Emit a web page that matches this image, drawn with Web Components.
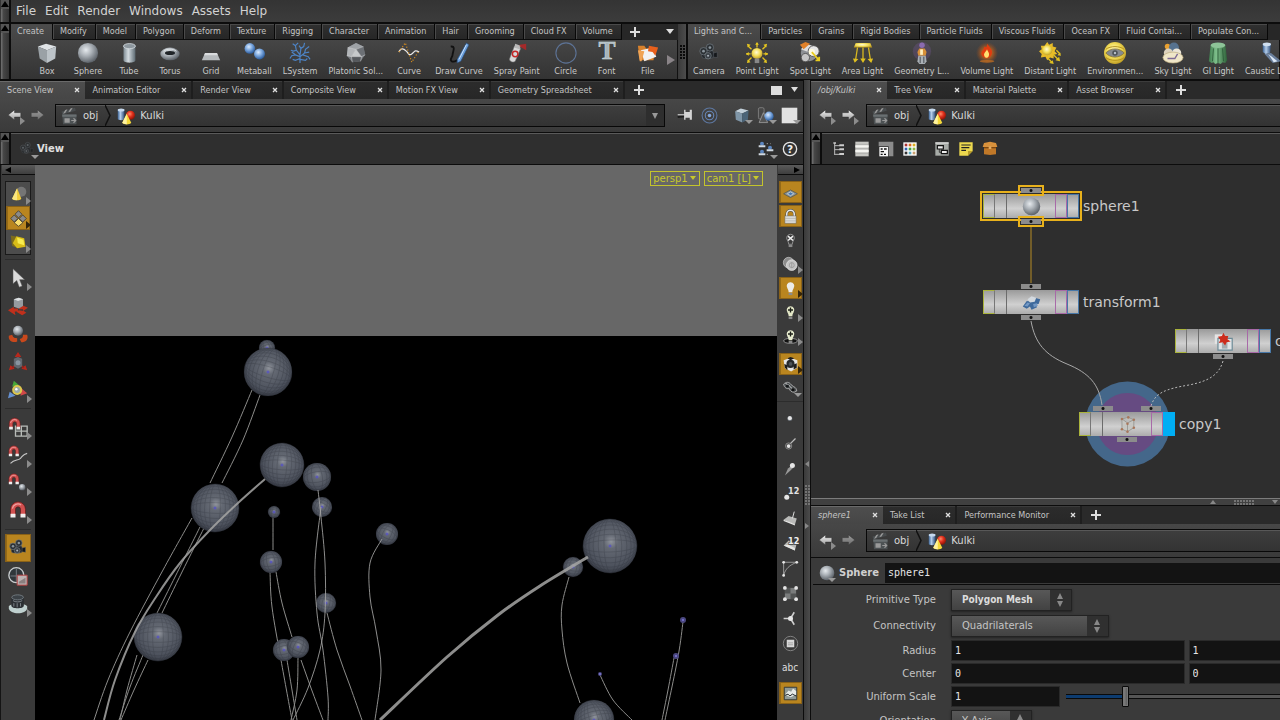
<!DOCTYPE html>
<html lang="en">
<head>
<meta charset="utf-8">
<title>Scene editor</title>
<style>
  html, body { height: 100%; }
  body {
    margin: 0;
    overflow: hidden;
    background: #2b2b2b;
    color: #cccccc;
    font: 10px/12px "DejaVu Sans", sans-serif;
  }
</style>
</head>
<body>
<hou-app></hou-app>

<script>
// ---------------------------------------------------------------- icons
const DEFS = `
  <defs>
    <radialGradient id="ball" cx=".4" cy=".35" r=".65"><stop offset="0" stop-color="#e6eaee"/><stop offset=".45" stop-color="#acb2b8"/><stop offset="1" stop-color="#5d636a"/></radialGradient>
    <radialGradient id="blue" cx=".4" cy=".35" r=".65"><stop offset="0" stop-color="#dcecff"/><stop offset=".5" stop-color="#7ba7de"/><stop offset="1" stop-color="#2c5c9c"/></radialGradient>
    <radialGradient id="redball" cx=".4" cy=".35" r=".65"><stop offset="0" stop-color="#ff8a6a"/><stop offset=".5" stop-color="#e0301c"/><stop offset="1" stop-color="#8c1408"/></radialGradient>
    <radialGradient id="gold" cx=".45" cy=".4" r=".65"><stop offset="0" stop-color="#fffbd8"/><stop offset=".5" stop-color="#f3de5a"/><stop offset="1" stop-color="#b8941c"/></radialGradient>
    <radialGradient id="glow"><stop offset="0" stop-color="#ff9a30"/><stop offset=".6" stop-color="#e06a10" stop-opacity=".45"/><stop offset="1" stop-color="#c05010" stop-opacity="0"/></radialGradient>
    <linearGradient id="steel"><stop offset="0" stop-color="#7d8a92"/><stop offset=".4" stop-color="#d3dbe0"/><stop offset="1" stop-color="#5d6a72"/></linearGradient>
    <linearGradient id="bluecyl"><stop offset="0" stop-color="#3c6496"/><stop offset=".4" stop-color="#b4cdea"/><stop offset="1" stop-color="#2c4c78"/></linearGradient>
    <linearGradient id="green"><stop offset="0" stop-color="#3d7a4c"/><stop offset=".4" stop-color="#7fc08c"/><stop offset="1" stop-color="#2d6038"/></linearGradient>
    <linearGradient id="arrow" x2="0" y2="1"><stop offset="0" stop-color="#f0f0f0"/><stop offset="1" stop-color="#a0a0a0"/></linearGradient>
  </defs>`;

const magnet = `<path d="M4 13V8a6 6 0 0 1 12 0v5h-4V8a2 2 0 0 0-4 0v5z" fill="#d0504f" stroke="#5c1a1a" stroke-width=".6"/><path d="M5.500 7.500a4.500 4.500 0 0 1 7-3" stroke="#f0a0a0" fill="none"/><path d="M4 11.500h4v3H4zM12 11.500h4v3h-4z" fill="#eee"/>`;
const camera = `<path d="M13 13l8-2v6l-8-1z" fill="#15181b" stroke="#60666c" stroke-width=".5"/><rect x="4" y="9" width="13" height="9" rx="3" fill="#23272b" stroke="#5c636a" stroke-width=".6"/><circle cx="13" cy="6" r="4" fill="#2c3135" stroke="#79828a" stroke-width=".7"/><circle cx="13" cy="6" r="1.500" fill="#8a949c"/><circle cx="6" cy="10" r="4" fill="#2c3135" stroke="#79828a" stroke-width=".7"/><circle cx="6" cy="10" r="1.500" fill="#8a949c"/><circle cx="11" cy="15" r="3.500" fill="#3a4046" stroke="#8a9299" stroke-width=".6"/><circle cx="11" cy="15" r="1.200" fill="#a8b0b8"/>`;
const cube = `<path d="M2 5l9-3 11 3-10 4z" fill="#dfe3e6"/><path d="M2 5l10 4v14L4 18z" fill="#9aa1a6"/><path d="M12 9l10-4-1 13-9 5z" fill="#bcc3c8"/>`;
const bulb = `<path d="M9 19h6v3.500H9z" fill="#8a8a8a"/><path d="M12 2a6 6 0 0 0-5 9.500c1 2 2 3.500 2 6.500h6c0-3 1-4.500 2-6.500A6 6 0 0 0 12 2z"`;
const dot = (x, y, r = 2) => `<circle cx="${x}" cy="${y}" r="${r}" fill="#e6e6e6"/>`;

const ICONS = {
  box: cube,
  sphere: `<circle cx="12" cy="12" r="11" fill="url(#ball)"/>`,
  tube: `<path d="M6 4v16c0 3.500 13 3.500 13 0V4z" fill="url(#steel)"/><ellipse cx="12.500" cy="4.500" rx="6.500" ry="2.800" fill="#8d979e" stroke="#dbe2e6" stroke-width=".8"/>`,
  torus: `<ellipse cx="12" cy="13" rx="10.500" ry="7" fill="url(#ball)"/><ellipse cx="12" cy="12" rx="5.500" ry="2.300" fill="#202428"/><path d="M5 10c3-3 11-3 14 0" stroke="#e4e8ea" fill="none"/>`,
  grid: `<path d="M5.500 12h13l3.500 8H2z" fill="#b6babd"/><path d="M5.500 12h13l1 2.500H4.500z" fill="#dadcde"/>`,
  metaball: `<circle cx="7.500" cy="7" r="5.800" fill="url(#blue)"/><circle cx="18" cy="13" r="6" fill="url(#blue)"/>`,
  lsystem: `<path d="M12 23V14L8 9l-3 1-3-1M8 9L7 4 4 2M7 4l3-3M12 16l-5-2-4 1-2 3M7 14l-4-3M12 14l1-7 3-2 1-4M13 7l-2-3M12 16l5-4 1-4 4-3M17 12l5-1M15 14l6 2 2 3M12 18l-5 2-3-1M12 19l6 1 2-2" stroke="#4d83c4" fill="none" stroke-width="1.300"/>`,
  platonic: `<path d="M12 1l8 4 2 9-5 7-9 1-6-7 1-9z" fill="#777b80"/><path d="M12 1l8 4-8 3-9-2z" fill="#9ea2a6"/><path d="M12 8l6 8H7z" fill="#c6c9cb"/><path d="M3 6l9 2-5 8-5-1z" fill="#b2b5b8"/><path d="M12 8l8-3 2 9-4 2z" fill="#6c7075"/><path d="M7 16h11l-1 5-9 1z" fill="#56595d"/><path d="M3 6l9 2 8-3M12 8l-5 8-5-1M7 16h11l4-2M12 8l6 8-1 5M7 16l1 6" fill="none" stroke="#ddd" stroke-width=".5"/>`,
  curve: `<path d="M1 11c2-5 5-4 8-1s3 5 6 3 3-5 8-2" fill="none" stroke="#e8e8e8" stroke-width="1.400"/><path d="M1 11L8 1l7 21 7-11" fill="none" stroke="#d08a20" stroke-width="1.300" stroke-dasharray="1.300 2"/>`,
  drawcurve: `<path d="M3 5c6-1 2 6 2 9s-4 5-1 7 6-2 8-2" fill="none" stroke="#111" stroke-width="2"/><path d="M20 1l3 2-9 18-4 2 0-4z" fill="#6ca0dc" stroke="#25466e" stroke-width=".7"/><path d="M20 3l-8 16" stroke="#cfe4fa"/>`,
  spray: `<path d="M9 5l7 2-6 14c-2 2-7 0-6-3z" fill="#d8d8d8" stroke="#777" stroke-width=".6"/><path d="M10 2l6 2-1 4-6-2z" fill="#b8b8b8"/><circle cx="10" cy="13" r="3" fill="none" stroke="#c62828" stroke-width="1.600"/><path d="M15 3l7-1 0 7-7-4z" fill="#c42222" opacity=".75"/>`,
  circle: `<circle cx="12" cy="12" r="11" fill="none" stroke="#5d7396" stroke-width="1.200"/>`,
  font: `<text x="12" y="19" text-anchor="middle" font-family="Liberation Serif, serif" font-weight="bold" font-size="28" fill="#a8b4ba" stroke="#dde4e8" stroke-width=".5">T</text>`,
  file: `<path d="M1 4h7l2 3h10l-2 13H3z" fill="#d8812c"/><path d="M4 9l14-3 3 10-13 5z" fill="#f2f2f2"/><path d="M1 9l7 1-3 11H3z" fill="#f0a455"/><path d="M13 4l10 2-3 9-3-4-5-1z" fill="#e8601c"/>`,
  camera,
  pointlight: `<path d="M12 6V1M6 8L2 4M18 8l4-4M5 13H0M19 13h5M6 17l-4 4M18 17l4 4" stroke="#e0c020" stroke-width="1.500" fill="none"/><path d="M10 3l2-3 2 3zM1 2l4 1-3 3zM23 2l-4 1 3 3zM3 11l-3 2 3 2zM21 11l3 2-3 2zM1 23l1-4 3 3zM23 23l-1-4-3 3z" fill="#e8c820"/><circle cx="12" cy="12.500" r="6" fill="url(#gold)"/><path d="M9.500 18h5v5h-5z" fill="#888"/>`,
  spotlight: `<circle cx="11" cy="12" r="9" fill="#8d9094"/><path d="M2 8l6-6 6 2-4 7z" fill="#ddd"/><path d="M1 3l6-3 5 2-7 6z" fill="#e0812a"/><circle cx="16" cy="10" r="6" fill="#e6e6e6" stroke="#555"/><circle cx="7" cy="17" r="4.500" fill="#c5c5c5" stroke="#555"/><circle cx="14" cy="11" r="3.500" fill="#fffbe0"/><path d="M14 11l8 9m0-4v4h-4" stroke="#e8cc20" fill="none" stroke-width="2"/>`,
  arealight: `<path d="M4 1h16l2 5H2z" fill="url(#gold)"/><path d="M6 6L4 19M12 6v13M18 6l2 13" stroke="#d8b820" stroke-width="1.400"/><path d="M1 18l6 .5-4 4zM9 18h6l-3 5zM17 18.500l6-.5-2 5z" fill="#e0c020"/>`,
  geolight: `<circle cx="12" cy="10" r="10" fill="#7a5a9a" opacity=".3"/><circle cx="12" cy="3.500" r="3" fill="#8a6ab0"/><path d="M9 7h6l2 4-1 4H8l-1-4z" fill="#d89038"/><path d="M10 8h3v6h-3z" fill="#fff0c0"/><path d="M8 15h8l1 6-2 3H9l-2-3z" fill="#aab0b6"/><path d="M10 16v7M14 16v7" stroke="#40454a"/>`,
  volumelight: `<circle cx="12" cy="12" r="12" fill="url(#glow)"/><path d="M12 2c3 4 7 7 5 12-2 5-9 5-11 0-1-4 3-5 3-9 2 1 3 2 3-3z" fill="#e03c10"/><path d="M12 8c1 3 3 4 2 7s-4 3-5 0 2-4 3-7z" fill="#ffe070"/><ellipse cx="12" cy="21" rx="8" ry="1.500" fill="#c87020" opacity=".7"/>`,
  distantlight: `<path d="M9 0l2 3 4-2 0 4 4 1-2 4 3 3-4 1 0 4-4-1-3 3-2-4-5 1 1-4-3-3 3-2-1-4 4 0z" fill="#e8bc28"/><circle cx="9" cy="9" r="5.500" fill="url(#gold)"/><path d="M15 13l6 6M19 9l4 4M10 18l4 4" stroke="#e0c020" stroke-width="1.500"/><path d="M23 21l-5-1 4-4zM24 15l-4-.5 3-3zM16 24l-5-1 4-3z" fill="#e0c020"/>`,
  envlight: `<circle cx="12" cy="12" r="12" fill="url(#gold)"/><path d="M2 8c5-4 15-4 20 0M2 17c5 4 15 4 20 0" stroke="#b08c18" fill="none"/><path d="M2 12c5-6 15-6 20 0-5 6-15 6-20 0z" fill="#858a90" stroke="#7a641c" stroke-width=".7"/><circle cx="12" cy="12" r="3" fill="#4c5258"/><circle cx="12" cy="12" r="1.300" fill="#b8c0c8"/>`,
  skylight: `<circle cx="6" cy="5" r="3" fill="#e8a030"/><circle cx="13" cy="6" r="5.500" fill="#56728f"/><circle cx="7" cy="12" r="5" fill="#ddd3be"/><circle cx="16" cy="12" r="5" fill="#ece6d8"/><ellipse cx="12" cy="17" rx="11" ry="6" fill="#efe6c8" stroke="#b8a878" stroke-width=".7"/><path d="M6 18h8l3-5" stroke="#7d6a94" fill="none" stroke-width="1.500"/>`,
  gilight: `<path d="M4 3l-2 18 3 2 2-1 2 2 3-1 3 1 2-2 3 1 2-3L20 3z" fill="url(#green)"/><ellipse cx="12" cy="3.500" rx="8" ry="3" fill="#8dc498"/><path d="M7 7L6 21M12 7v16M17 7l1 14" stroke="#2c5c38"/>`,
  causticlight: `<path d="M3 2v9l3 2 5-1 1-10z" fill="url(#bluecyl)"/><ellipse cx="7.500" cy="2.500" rx="4.500" ry="2" fill="#cfdff0"/><path d="M5 13l7-1 11 9-9 2z" fill="#7590b4" opacity=".8"/><path d="M9 13l10 8-4 1z" fill="#dce8f6"/>`,

  back: `<path d="M2 11l10-8v4.500h10v7H12V19z" fill="url(#arrow)" stroke="#222" stroke-width=".6"/>`,
  forward: `<path d="M22 11l-10-8v4.500H2v7h10V19z" fill="url(#arrow)" stroke="#222" stroke-width=".6"/>`,
  obj: `<path d="M2 6l18-5 1 4L3 10z" fill="#484c4e"/><path d="M4 9l3-5 3-1-3 5zM11 7l3-5 3-1-3 5z" fill="#999"/><path d="M3 10h19v13H4z" fill="#4d5254"/><path d="M3 10h19v3H3z" fill="#6a7072"/><path d="M6 15h7v6H6z" fill="#9a9a9a"/><path d="M15 18h6M18 15l3 3-3 3" fill="none" stroke="#999" stroke-width="1.500"/>`,
  geo: `<path d="M1 4v12c0 2 9 2 9 0V4z" fill="url(#bluecyl)"/><ellipse cx="5.500" cy="4" rx="4.500" ry="2" fill="#c6d9ee"/><circle cx="18" cy="11" r="6" fill="url(#redball)"/><path d="M13 9l6 12c-2 3-10 3-12 0z" fill="#f5d93a"/><path d="M13 9v14c-3 0-5-1-6-2z" fill="#fff3a0"/>`,
  pin: `<path d="M1 14l10-1" stroke="#1c1c1c" stroke-width="3"/><path d="M1 11h11" stroke="#ddd" stroke-width="1.500"/><path d="M10 4h2v3h6V4h3v14h-3v-3h-6v3h-2z" fill="#d4d4d4"/>`,
  target: `<circle cx="12" cy="12" r="10.500" fill="none" stroke="#5d77a0" stroke-width="1.500"/><circle cx="12" cy="12" r="6" fill="none" stroke="#6686b8" stroke-width="1.500"/><circle cx="12" cy="12" r="2.500" fill="#86a8dc"/>`,
  cubeblue: `<path d="M3 6l8-4 11 3-9 4z" fill="#c3d0da"/><path d="M3 6l10 3v13L4 18z" fill="#7f96a8"/><path d="M13 9l9-4-1 13-8 4z" fill="#4b6478"/>`,
  shapes: `<rect x="2" y="1" width="8" height="16" rx="2" fill="#484848" stroke="#909090"/><path d="M9 8l6 14H3z" fill="#555" stroke="#aaa"/><circle cx="17" cy="13" r="6.500" fill="url(#blue)"/>`,
  square: `<path d="M1 1h22v22H1z" fill="#e2e2e2"/>`,
  people: `<g fill="#5c86c0"><circle cx="6" cy="4" r="3"/><circle cx="18" cy="10" r="3"/><circle cx="6" cy="16" r="3"/></g><path d="M1 8h10M13 14h10M1 20h10" stroke="#d0d8e0" stroke-width="3"/><path d="M13 4h2M13 20h2M18 4h1" stroke="#999" stroke-width="1.500"/>`,
  help: `<circle cx="12" cy="12" r="10" fill="#333" stroke="#e4e4e4" stroke-width="2"/><text x="12" y="18" text-anchor="middle" font-family="DejaVu Sans, sans-serif" font-weight="bold" font-size="16" fill="#f0f0f0">?</text>`,

  tree: `<path d="M7 3v18M7 7h8M7 13h8M7 20h8" stroke="#bbb" fill="none" stroke-width="1.500"/><path d="M5 2h4v2H5zM14 5h7v3h-7zM14 11h7v3h-7zM14 18h7v3h-7z" fill="#ccc"/>`,
  list: `<path d="M2 1h20v22H2z" fill="#c6c6c2"/><path d="M2 8h20M2 15h20" stroke="#f4f4f0" stroke-width="3.500"/><path d="M2 5h20M2 11.500h20M2 18.500h20" stroke="#9e9e9a" stroke-width=".8"/>`,
  split: `<path d="M1 1h22v22h-7V8H1z" fill="#8c8c8c"/><path d="M2 9h13v14H2z" fill="#f4f4f4"/><path d="M4 12h3M9 12h4M4 16h5M4 20h3M9 20h3" stroke="#111" stroke-width="2"/>`,
  palette: `<path d="M2 2h20v20H2z" fill="#fff"/><g><path d="M4 4h4v4H4z" fill="#a83232"/><path d="M10 4h4v4h-4z" fill="#d86a20"/><path d="M16 4h4v4h-4z" fill="#e0b020"/><path d="M4 10h4v4H4z" fill="#3060b0"/><path d="M10 10h4v4h-4z" fill="#48a040"/><path d="M16 10h4v4h-4z" fill="#90b840"/><path d="M4 16h4v4H4z" fill="#333"/><path d="M10 16h4v4h-4z" fill="#5aa8c0"/><path d="M16 16h4v4h-4z" fill="#c8a070"/></g>`,
  nodebox: `<path d="M2 2h20v20H2z" fill="#a8aca8"/><path d="M2 2h20v2H2z" fill="#ddd"/><path d="M5 7h9v5H5zM11 14h9v5h-9z" fill="#eee" stroke="#111" stroke-width="1.800"/><path d="M8 12v5h3" stroke="#111" fill="none"/>`,
  note: `<path d="M2 2h20v13l-7 7H2z" fill="#ecd84e"/><path d="M15 22v-7h7z" fill="#b89c28"/><path d="M5 6h14M5 10h12M5 14h7" stroke="#222" stroke-width="1.800"/>`,
  chest: `<path d="M3 3l9-2 9 2 2 6H1z" fill="#d8913c"/><path d="M3 9h18v11l-9 1-9-1z" fill="#c07828"/><path d="M3 9h18v2H3z" fill="#7a4610"/><path d="M10 8h4v4h-4z" fill="#e0a860"/>`,

  selobj: `<circle cx="16" cy="8" r="7" fill="#757575"/><path d="M10 3l6 15c-2 3-11 3-13 0z" fill="#f0cc3c"/><path d="M10 3v17c-4 0-6-1-7-2z" fill="#f8e680"/>`,
  selprim: `<g stroke="#303030"><path d="M12 1l5 5-5 5-5-5zM6 7l5 5-5 5-5-5zM18 7l5 5-5 5-5-5z" fill="#8a8a8a"/><path d="M12 12l6 6-6 5-6-5z" fill="#f6dc70"/></g>`,
  seldyn: `<path d="M1 2l9 2 2 16-9-3z" fill="#8a7410" opacity=".8"/><path d="M9 3l11 3 2 12-12 2-6-7z" fill="#d8bc18"/><path d="M10 5l9 3 1 8-9-3z" fill="#f8ec50"/>`,
  select: `<path d="M6 1v18l4.500-4 3 8 3.500-1.500-3-7.500h6z" fill="#dadada" stroke="#555" stroke-width=".6"/>`,
  move: `<path d="M0 17l7-4v2h5v3l-4 1 1 4zM24 14l-7-3v2h-4v3h5v2zM10 19l7 4 5-3-3-2-6-1z" fill="#c0301c"/><path d="M7 4l6-2 5 2v8l-5 3-6-2z" fill="#969ba0"/><path d="M7 4l6-2 5 2-6 2z" fill="#dde0e2"/>`,
  rotate: `<path d="M1 14c-1 6 5 9 10 7v-4c-4 0-5-1-6-4zM23 13c2 6-2 9-7 9l-2-4c3 0 4-2 4-5z" fill="#c8481c"/><circle cx="12" cy="8" r="6" fill="url(#ball)"/>`,
  scale: `<path d="M12 0l4 6H8zM1 22l2-6 5 4zM23 22l-2-6-5 4z" fill="#b8281c"/><path d="M12 5v6M5 19l5-4M19 19l-5-4" stroke="#a02018" stroke-width="2"/><path d="M7 8l5-2 5 2v9l-5 3-5-3z" fill="#61676e"/><circle cx="12" cy="13" r="3" fill="#8894a0"/>`,
  handle: `<path d="M5 8l2-7 6 5z" fill="#48a838"/><path d="M0 22l2-8 7 5z" fill="#6690d0"/><path d="M23 16l-8 3 1-9z" fill="#d04848"/><circle cx="11" cy="12" r="6" fill="#dcc850"/><circle cx="11" cy="12" r="3.500" fill="#9aa"/><circle cx="10" cy="11" r="1.500" fill="#fff"/>`,
  snapgrid: `<path d="M9 11h14v12H9zM16 11v12M9 17h14" stroke="#b8bcb8" fill="none" stroke-width="1.600"/><g transform="translate(-3 -1) scale(1.100)">` + magnet + `</g>`,
  snapcurve: `<path d="M3 22c5-5 9-3 12-6s3-5 8-6" stroke="#c6c6c6" fill="none" stroke-width="1.400"/><g transform="translate(-3 -1)">` + magnet + `</g>`,
  snappoint: `<g transform="translate(-3 -1)">` + magnet + `</g><circle cx="17" cy="17" r="3.800" fill="url(#ball)"/>`,
  snapmulti: `<g transform="translate(-3 -2) scale(1.500)">` + magnet + `</g>`,
  flipbook: `<circle cx="10" cy="11" r="9" fill="#30363a" stroke="#c8ccce" stroke-width="1.600"/><path d="M3 12h14M10 3v16" stroke="#808890"/><path d="M11 11h12v12H11z" fill="#bdb2b2" stroke="#b04040" stroke-width="1.200"/><path d="M13 19l8-5v7h-8z" fill="#8a8080"/>`,
  render: `<path d="M1 15c0-4 22-4 22 0v2c-1 8-21 8-22 0z" fill="#bfd0cf"/><path d="M4 6c0-5 15-5 15 0v8c0 4-15 4-15 0z" fill="#2b2f33"/><ellipse cx="11.500" cy="4" rx="7" ry="3" fill="#3c4247" stroke="#7a8288"/><path d="M6 8c3 2 8 2 11 0M7 11v4M11 11v5M15 11v4" fill="none" stroke="#8a9298"/>`,

  plane: `<path d="M12 8l11 6-11 6-11-6z" fill="#8e989c" stroke="#40484c"/><path d="M12 11l5 3-5 3-5-3z" fill="#4878b0" stroke="#dce4e8"/>`,
  lock: `<path d="M6 12V8a6 6 0 0 1 12 0v4" fill="none" stroke="#40454a" stroke-width="4"/><path d="M6 12V8a6 6 0 0 1 12 0v4" fill="none" stroke="#e6e6e6" stroke-width="2.500"/><path d="M3 11h18v12H3z" fill="#dcdcda" stroke="#555" stroke-width=".7"/><path d="M3 15h18M3 19h18" stroke="#a8a8a4"/>`,
  nolight: bulb + ` fill="#3a3a3a" stroke="#bbb"/><path d="M8 5l8 7M16 5l-8 7" stroke="#eee" stroke-width="2.500"/>`,
  headlight: `<circle cx="9" cy="9" r="8.500" fill="#8c8c8c" stroke="#d4d4d4"/><circle cx="14" cy="13" r="8.500" fill="#c4c4c4" stroke="#efefef"/><circle cx="14" cy="13" r="4" fill="none" stroke="#8a8a8a"/><path d="M14 9v8" stroke="#888"/>`,
  light: bulb + ` fill="#ececea"/>`,
  lightplus: bulb + ` fill="#e4e8c8"/><path d="M12 4v8M8 8h8" stroke="#1c2018" stroke-width="2.200"/>`,
  lightshadow: `<ellipse cx="12" cy="19" rx="11" ry="4" fill="#111" stroke="#c8c8c8"/>` + bulb + ` fill="#e8ecd0"/><path d="M12 4v8M8 8h8" stroke="#1c2018" stroke-width="2.200"/>`,
  checker: `<path d="M1 5l11-4 11 4v12l-10 6-10-5z" fill="#e6e6e6"/><path d="M2 11l5 2v8l-4-4zM12 0l6 2-6 3-5-3zM17 12l5-2v7l-5 3z" fill="#1c1c1c"/><circle cx="12" cy="11" r="6.500" fill="#26292c"/><circle cx="12" cy="11" r="3" fill="#4c5258"/>`,
  eye: `<path d="M1 5c4-4 9-4 12 1l4 3c3 1 5 4 5 7l-4 2c-4 0-7-2-8-6-4 1-8-1-9-7z" fill="#4a4e50" stroke="#bbb" stroke-width="1.300"/><path d="M4 4c3 1 8 4 10 8" stroke="#ddd" fill="none" stroke-width="1.500"/><circle cx="7" cy="8" r="2.500" fill="#15181a"/><circle cx="16" cy="14" r="2.500" fill="#111"/>`,
  point: `<circle cx="11" cy="12" r="4" fill="url(#ball)"/>` + dot(11, 11.500, 3),
  pointnormal: `<path d="M9 15L20 4" stroke="#bbb" stroke-width="2"/><circle cx="9" cy="16" r="5" fill="#444" stroke="#aaa"/>` + dot(9, 16, 3),
  pointtrail: `<path d="M3 23l5-11 6-5 2 4-5 5z" fill="#999"/>` + dot(15, 7, 4),
  pointnum: dot(6, 18, 4) + `<text x="8" y="13" font-family="DejaVu Sans, sans-serif" font-weight="bold" font-size="13" fill="#e2e2e2">12</text>`,
  primnormal: `<path d="M1 14l8-6 13 4-3 10-9-4z" fill="#b9bab8"/><path d="M1 14l9 3 9 4v2L1 16z" fill="#e6e6e4"/><path d="M15 12l3-11" stroke="#ddd" stroke-width="1.600"/>`,
  primnum: `<path d="M1 15l8-8 13 5-3 11-9-4z" fill="#b9bab8"/><path d="M1 15l18 8v-4l-10-5z" fill="#e6e6e4"/><text x="8" y="12" font-family="DejaVu Sans, sans-serif" font-weight="bold" font-size="13" fill="#eee" stroke="#3a3a3a" stroke-width="2" paint-order="stroke">12</text>`,
  hull: `<path d="M1 23V2h21M1 23C4 12 10 7 22 2" fill="none" stroke="#b4b4b4" stroke-width="1.200"/>` + dot(1, 23, 2.200) + dot(1, 2, 2.200) + dot(22, 2, 2.200),
  uv: `<path d="M3 3h18v18H3z" fill="#7a7c7c"/><path d="M3 3h9v9H3zM12 12h9v9h-9z" fill="#525454"/>` + dot(3, 3, 3) + dot(21, 3, 3) + dot(3, 21, 3) + dot(21, 21, 3),
  axes: `<path d="M12 12l6-10M12 12l6 10M12 12H1" stroke="#cfcfcf" stroke-width="2.500"/>` + dot(12, 12, 4),
  material: `<circle cx="12" cy="12" r="11.500" fill="#3a3a3a" stroke="#858585" stroke-width="1.500"/><path d="M6 6h12v12H6z" fill="#d8d8d8"/><path d="M8 11h8M8 14h8" stroke="#888"/>`,
  image: `<path d="M2 2h20v20H2z" fill="#8f9a98" stroke="#303636" stroke-width="1.500"/><path d="M3 14l6-7 4 2 3-5 5 4v6l-9 4z" fill="#e6eae8"/><path d="M3 15l5-2 3 3 4-3 6 3" stroke="#252b2b" stroke-width="1.600" fill="none"/>`,

  transform: `<path d="M1 17l5-7 7 1 3-5 7 2-2 6h-4l2 4-7 3-2-4-4 3z" fill="#3f6a9c"/><path d="M7 8l5-4 6 2-2 5-6 1z" fill="#d3d9df"/><path d="M3 16l4-4 3 1-3 4zM14 14l5-1 1 3-5 2z" fill="#7398c4"/>`,
  object: `<path d="M1 3h12v12H1z" fill="#e4e4e4"/><path d="M5 8h18v15H5z" fill="#dfe4e6" stroke="#6d8a96" stroke-width="1.500"/><path d="M10 13h7v8h-7z" fill="#a4acb0"/><path d="M12 1l2 4 4 0-1 4 4 3-5 1-2 4-3-4-5 1 2-4-3-4 5-1z" fill="#cc2c1c"/>`,
  copy: `<path d="M5 5l8-2 7 3v10l-8 5-7-3zM5 5l7 5 8-4M12 10v11" fill="#c6c6c2" stroke="#90908c"/><g fill="#a8765a"><circle cx="5" cy="5" r="1.600"/><circle cx="13" cy="3" r="1.600"/><circle cx="20" cy="6" r="1.600"/><circle cx="20" cy="16" r="1.600"/><circle cx="12" cy="21" r="1.600"/><circle cx="5" cy="18" r="1.600"/><circle cx="12" cy="11" r="1.600"/></g>`
};

class HouIcon extends HTMLElement {
  constructor() {
    super();
    this.attachShadow({ mode: 'open' });
  }
  connectedCallback() {
    this.shadowRoot.innerHTML = `
      <style>
        :host { display: block; flex: none; width: 20px; height: 20px; }
        svg { display: block; width: 100%; height: 100%; overflow: visible; }
      </style>
      <svg viewBox="0 0 24 24" aria-hidden="true">${DEFS}${ICONS[this.getAttribute('name')] || ''}</svg>`;
  }
}
customElements.define('hou-icon', HouIcon);

// ---------------------------------------------------------------- small parts
class HouGrip extends HTMLElement {
  constructor() {
    super();
    this.attachShadow({ mode: 'open' });
    this.shadowRoot.innerHTML = `
      <style>
        :host {
          display: block;
          flex: none;
          box-sizing: border-box;
          width: 10px;
          border: solid #0c0c0c;
          border-width: 0 2px 0 0;
          margin-left: 1px;
          background: linear-gradient(90deg, #6a6a6a 1px, #484848 2px, #333);
        }
        svg { display: block; }
      </style>
      <svg width="8" height="9"><path d="M0 0h8v9H0z" fill="#555"/><path d="M4 1l4 6H0z" fill="#000"/></svg>`;
  }
}
customElements.define('hou-grip', HouGrip);

class HouMenuBar extends HTMLElement {
  constructor() {
    super();
    this.attachShadow({ mode: 'open' });
    this.shadowRoot.innerHTML = `
      <style>
        :host {
          display: flex;
          height: 22px;
          flex: none;
          background: linear-gradient(#343434, #3c3c3c);
          border-bottom: 2px solid #0c0c0c;
        }
        nav { display: flex; align-items: center; gap: 9px; padding-left: 5px; }
        button {
          border: 0; padding: 0; background: none; color: #d2d2d2;
          font: 12px/16px "DejaVu Sans", sans-serif;
        }
      </style>
      <hou-grip></hou-grip>
      <nav>${['File', 'Edit', 'Render', 'Windows', 'Assets', 'Help'].map(t => `<button>${t}</button>`).join('')}</nav>`;
  }
}
customElements.define('hou-menu-bar', HouMenuBar);

// ---------------------------------------------------------------- shelves
class HouShelfTab extends HTMLElement {
  constructor() {
    super();
    this.attachShadow({ mode: 'open' });
    this.shadowRoot.innerHTML = `
      <style>
        :host { display: flex; flex: none; }
        button {
          border: 0;
          border-right: 1px solid #080808;
          border-bottom: 1px solid #0c0c0c;
          box-shadow: inset 1px 1px #4a4a4a;
          padding: 0 8px 0 7px;
          background: linear-gradient(#303030, #262626);
          color: #c4c4c4;
          font: 9px/15px "DejaVu Sans Condensed", "DejaVu Sans", sans-serif;
        }
        :host([active]) button {
          background: linear-gradient(#4c4c4c, #444);
          border-bottom-color: #444;
          padding-left: 6px;
        }
      </style>
      <button role="tab"><slot></slot></button>`;
  }
}
customElements.define('hou-shelf-tab', HouShelfTab);

class HouShelfTool extends HTMLElement {
  constructor() {
    super();
    this.attachShadow({ mode: 'open' });
    this.shadowRoot.innerHTML = `
      <style>
        :host { display: block; flex: none; }
        button {
          display: flex;
          flex-direction: column;
          align-items: center;
          box-sizing: border-box;
          min-width: 41px;
          border: 0;
          padding: 2px 6px 2px 5px;
          background: none;
          color: #c8c8c8;
          font: 9px/11px "DejaVu Sans Condensed", "DejaVu Sans", sans-serif;
          white-space: nowrap;
        }
        hou-icon { width: 22px; height: 22px; margin-bottom: 2px; }
      </style>
      <button><hou-icon name="${this.getAttribute('icon')}"></hou-icon><slot></slot></button>`;
  }
}
customElements.define('hou-shelf-tool', HouShelfTool);

class HouShelf extends HTMLElement {
  constructor() {
    super();
    this.attachShadow({ mode: 'open' });
    this.shadowRoot.innerHTML = `
      <style>
        :host { display: flex; min-width: 0; overflow: hidden; }
        .shelf { flex: 1; min-width: 0; }
        .tabs { display: flex; background: #272727; height: 16px; }
        .tools {
          display: flex;
          height: 39px;
          padding-left: 16px;
          background: linear-gradient(#464646, #333);
          border-right: 1px solid #111;
        }
        button { border: 0; padding: 0; background: none; display: flex; align-items: center; }
        .add { margin-left: 8px; }
        .drop { margin: 0 4px 0 auto; }
        .more { margin-left: -2px; }
        :host([bare]) hou-grip, :host([bare]) button { display: none; }
        :host([bare]) .tools { padding-left: 0; }
      </style>
      <hou-grip></hou-grip>
      <div class="shelf">
        <div class="tabs">
          <slot name="tab"></slot>
          <button class="add" aria-label="New shelf"><svg width="10" height="10"><path d="M4 0h2v4h4v2H6v4H4V6H0V4h4z" fill="#ddd"/></svg></button>
          <button class="drop" aria-label="Shelf menu"><svg width="8" height="6"><path d="M0 0h8L4 5z" fill="#e0e0e0"/></svg></button>
        </div>
        <div class="tools">
          <slot></slot>
          <button class="more" aria-label="More tools"><svg width="8" height="10"><path d="M0 0l8 5-8 5z" fill="#8a8488"/></svg></button>
        </div>
      </div>`;
  }
}
customElements.define('hou-shelf', HouShelf);

class HouSplitter extends HTMLElement {
  constructor() {
    super();
    this.attachShadow({ mode: 'open' });
  }
  connectedCallback() {
    const kind = this.getAttribute('kind');
    const dots = (w, h, color = '#8a8a8a') => {
      let out = '';
      for (let y = 0; y < h; y += 3) {
        for (let x = 0; x < w; x += 3) out += `<path d="M${x} ${y}h2v2h-2z"/>`;
      }
      return `<svg width="${w}" height="${h}" fill="${color}">${out}</svg>`;
    };
    const marks = {
      shelf: dots(5, 14, '#0a0a0a'),
      column: `<svg width="4" height="6"><path d="M4 0v6L0 3z" fill="#888"/></svg>${dots(5, 20, '#747474')}<svg width="4" height="6"><path d="M0 0v6l4-3z" fill="#888"/></svg>`,
      row: `<svg width="6" height="4"><path d="M0 4h6L3 0z" fill="#888"/></svg>${dots(20, 5, '#747474')}<svg width="6" height="4"><path d="M0 0h6L3 4z" fill="#888"/></svg>`
    };
    this.shadowRoot.innerHTML = `
      <style>
        :host { display: flex; align-items: center; background: linear-gradient(90deg, #3a3a3a, #4c4c4c); }
        :host([kind=shelf]) { justify-content: center; border-right: 2px solid #0c0c0c; }
        :host([kind=column]) { flex-direction: column; gap: 18px; border: solid #0c0c0c; border-width: 0 1px; }
        :host([kind=column])::before { content: ""; flex: 21; }
        :host([kind=column])::after { content: ""; flex: 10; }
        :host([kind=row]) { gap: 18px; padding-left: 85%; height: 6px; background: #404040; border-top: 1px solid #7c7c7c; overflow: hidden; }
        svg { flex: none; }
      </style>${marks[kind]}`;
  }
}
customElements.define('hou-splitter', HouSplitter);

// ---------------------------------------------------------------- panes
class HouTab extends HTMLElement {
  constructor() {
    super();
    this.attachShadow({ mode: 'open' });
    this.shadowRoot.innerHTML = `
      <style>
        :host {
          display: flex;
          align-items: center;
          flex: none;
          gap: 21px;
          padding: 0 6px 0 7px;
          box-shadow: inset -2px 0 #1e1e1e, inset 0 1px #3c3c3c;
          background: linear-gradient(#2c2c2c, #272727);
          color: #c4c4c4;
        }
        :host([active]) { padding-right: 5px; background: linear-gradient(#4e4e4e, #464646); box-shadow: inset 0 1px #6a6a6a; }
        :host([current]) .name { font-style: italic; }
        button {
          border: 0; padding: 0; background: none; color: inherit;
          font: 9px/17px "DejaVu Sans Condensed", "DejaVu Sans", sans-serif;
          white-space: nowrap;
        }
        svg { display: block; }
      </style>
      <button class="name" role="tab"><slot></slot></button>
      <button aria-label="Close tab"><svg width="6" height="6"><path d="M1 1l4 4M5 1L1 5" stroke="#e0e0e0" stroke-width="1.300"/></svg></button>`;
  }
}
customElements.define('hou-tab', HouTab);

class HouTabs extends HTMLElement {
  constructor() {
    super();
    this.attachShadow({ mode: 'open' });
    this.shadowRoot.innerHTML = `
      <style>
        :host { display: flex; flex: none; height: 18px; background: #2a2a2a; border-top: 1px solid #0c0c0c; overflow: hidden; }
        button { border: 0; padding: 0; background: none; display: flex; align-items: center; }
        .add { margin-left: 9px; }
        .end { display: none; gap: 9px; margin: 0 5px 0 auto; }
        :host([controls]) .end { display: flex; }
      </style>
      <slot></slot>
      <button class="add" aria-label="New tab"><svg width="10" height="10"><path d="M4 0h2v4h4v2H6v4H4V6H0V4h4z" fill="#ddd"/></svg></button>
      <div class="end">
        <button aria-label="Maximize pane"><svg width="11" height="9"><path d="M0 0h11v9H0z" fill="#ddd"/></svg></button>
        <button aria-label="Pane menu"><svg width="7" height="6"><path d="M0 0h7L3.500 5z" fill="#ddd"/></svg></button>
      </div>`;
  }
}
customElements.define('hou-tabs', HouTabs);

// Button with an icon; "menu" adds the small arrow for the drop-down.
class HouTool extends HTMLElement {
  constructor() {
    super();
    this.attachShadow({ mode: 'open' });
  }
  connectedCallback() {
    this.shadowRoot.innerHTML = `
      <style>
        :host { display: block; flex: none; position: relative; }
        button {
          display: flex; align-items: center; justify-content: center;
          box-sizing: border-box;
          width: var(--tool-w, 24px);
          height: var(--tool-h, 24px);
          border: 0; padding: 0; background: none; color: #ddd;
          font: 10px/12px "DejaVu Sans Condensed", "DejaVu Sans", sans-serif;
        }
        :host([on]) button { background: #b9851f; box-shadow: inset 0 0 0 1px #8a6218, inset 2px 0 #946a18; }
        :host([dim]) hou-icon { opacity: .5; }
        hou-icon { width: var(--icon, 20px); height: var(--icon, 20px); }
        :host([menu])::after {
          content: "";
          position: absolute;
          right: -1px;
          bottom: 1px;
          border: 4px solid transparent;
          border-left: 5px solid #8c8c8c;
          border-right: 0;
        }
        :host([menu=down])::after { border: 4px solid transparent; border-top: 4px solid #999; border-bottom: 0; right: 0; bottom: 2px; }
        :host([on][menu])::after { border-left-color: #33240a; }
      </style>
      <button aria-label="${this.getAttribute('icon') || 'abc'}">${this.hasAttribute('icon') ? `<hou-icon name="${this.getAttribute('icon')}"></hou-icon>` : ''}<slot></slot></button>`;
  }
}
customElements.define('hou-tool', HouTool);

class HouPathBar extends HTMLElement {
  constructor() {
    super();
    this.attachShadow({ mode: 'open' });
    this.shadowRoot.innerHTML = `
      <style>
        :host {
          display: flex;
          align-items: center;
          flex: none;
          height: 33px;
          padding-left: 5px;
          background: linear-gradient(#474747, #3a3a3a);
          border-bottom: 1px solid #0c0c0c;
          --tool-w: 19px;
          --tool-h: 20px;
          --icon: 15px;
        }
        .nav { display: flex; gap: 4px; }
        .path {
          display: flex;
          align-items: stretch;
          flex: 1;
          min-width: 0;
          height: 21px;
          margin-left: 8px;
          border: 1px solid #080808;
          box-shadow: inset 0 1px #585858;
          background: linear-gradient(#3e3e3e, #333);
        }
        a {
          display: flex; align-items: center; gap: 5px;
          padding-left: 4px;
          color: #d8d8d8; text-decoration: none;
        }
        a hou-icon { width: 18px; height: 18px; }
        .chevron { margin: 0 2px 0 7px; }
        .drop { margin-left: auto; border: 0; padding: 0; width: 18px; background: #2e2e2e; }
        :host([plain]) .drop { display: none; }
        :host([plain]) .path { border-right: 0; }
        ::slotted(hou-tool) { --tool-w: 24px; --icon: 17px; }
      </style>
      <div class="nav">
        <hou-tool icon="back" menu></hou-tool>
        <hou-tool icon="forward" ${this.hasAttribute('ahead') ? 'menu' : 'dim'}></hou-tool>
      </div>
      <div class="path">
        <a href="#obj"><hou-icon name="obj"></hou-icon>obj</a>
        <svg class="chevron" width="6" height="21"><path d="M0 0l5 10.500L0 21" fill="none" stroke="#111" stroke-width="1.500"/></svg>
        <a href="#kulki"><hou-icon name="geo"></hou-icon>Kulki</a>
        <button class="drop" aria-label="Recent paths"><svg width="8" height="7"><path d="M1 0h6L4 6z" fill="#999"/></svg></button>
      </div>
      <slot></slot>`;
  }
}
customElements.define('hou-path-bar', HouPathBar);

class HouToolbar extends HTMLElement {
  constructor() {
    super();
    this.attachShadow({ mode: 'open' });
    this.shadowRoot.innerHTML = `
      <style>
        :host { display: flex; flex: none; height: 31px; border-bottom: 1px solid #0c0c0c; background: #2f2f2f; }
        .row {
          display: flex; flex: 1; align-items: center; min-width: 0;
          box-shadow: inset 0 1px #5a5a5a;
          padding: 0 1px 0 4px;
          --icon: 16px;
        }
      </style>
      <hou-grip></hou-grip>
      <div class="row"><slot></slot></div>`;
  }
}
customElements.define('hou-toolbar', HouToolbar);

// ---------------------------------------------------------------- 3D view
const BALLS = [
  [267, 348, 8], [268, 372, 24], [282, 465, 22], [317, 477, 14], [322, 507, 10], [274, 512, 6],
  [215, 508, 24], [271, 562, 11], [387, 534, 11], [326, 603, 10], [158, 637, 24], [284, 650, 11],
  [298, 647, 11], [573, 567, 10], [610, 546, 27], [594, 720, 20], [683, 620, 3], [676, 656, 3], [600, 674, 2]
];
// [width, x, y, x, y, ...]
const STEMS_BACK = [
  [1, 252, 390, 232, 437, 210, 483],
  [1, 260, 395, 243, 440, 222, 483],
  [1, 192, 518, 163, 570, 130, 632, 108, 680, 94, 720],
  [1, 204, 528, 182, 572, 162, 613],
  [1, 200, 527, 176, 575, 157, 613],
  [1, 148, 660, 134, 690, 121, 720],
  [1, 143, 655, 130, 687, 119, 720],
  [1, 137, 655, 127, 690, 120, 720],
  [1, 273, 515, 273, 550],
  [1, 270, 572, 272, 607, 281, 660, 292, 720],
  [1, 276, 572, 282, 603, 292, 637],
  [1, 287, 660, 292, 690, 297, 720],
  [1, 298, 658, 297, 690, 291, 720],
  [1, 301, 660, 311, 688, 323, 720],
  [1, 327, 613, 337, 650, 350, 686, 362, 720],
  [1, 569, 577, 562, 605, 562, 630, 567, 663, 580, 703],
  [1, 600, 675, 613, 700, 632, 720],
  [1, 683, 622, 678, 657, 665, 720],
  [1, 674, 658, 668, 690, 662, 720]
];
const STEMS_FRONT = [
  [2, 265, 479, 238, 503, 210, 530, 180, 563, 156, 597, 135, 632, 115, 680, 104, 720],
  [1, 318, 490, 321, 517, 325, 563, 325, 613, 320, 650, 308, 688, 293, 720],
  [1, 321, 507, 315, 563, 317, 613, 323, 650, 328, 697, 328, 720],
  [1, 382, 539, 370, 563, 370, 597, 376, 630, 381, 670, 375, 720],
  [3, 380, 720, 447, 657, 498, 615, 540, 586, 588, 557]
];

function spline(points) {
  const p = [];
  for (let i = 0; i < points.length; i += 2) p.push([points[i], points[i + 1]]);
  let d = `M${p[0]}`;
  for (let i = 0; i < p.length - 1; i++) {
    const a = p[i - 1] || p[i], b = p[i], c = p[i + 1], e = p[i + 2] || c;
    d += `C${b[0] + (c[0] - a[0]) / 6} ${b[1] + (c[1] - a[1]) / 6} ${c[0] - (e[0] - b[0]) / 6} ${c[1] - (e[1] - b[1]) / 6} ${c}`;
  }
  return d;
}

function stem([width, ...points]) {
  return `<path d="${spline(points)}" stroke-width="${width}"/>`;
}

function ball([x, y, r], i) {
  if (r < 4) return `<circle cx="${x}" cy="${y}" r="${r}" fill="#4b4880"/><circle cx="${x}" cy="${y}" r="1" fill="#7d78d8"/>`;
  const n = r > 15 ? 7 : 4;
  let mesh = '';
  for (let k = 0; k < n; k++) {
    const s = r * Math.sin((k / n) * Math.PI / 2);
    mesh += `<ellipse rx="${s}" ry="${r}"/><ellipse rx="${r}" ry="${s}"/>`;
  }
  return `<g transform="translate(${x} ${y})">
    <circle r="${r}" fill="url(#skin)"/>
    <g transform="rotate(${(i * 37) % 50 - 20})" fill="none" stroke="#23262e" stroke-width=".6" opacity=".32">${mesh}</g>
    <path d="M-1.500 0h3M0-1.500v3" stroke="#5450c8"/>
  </g>`;
}

class HouViewport extends HTMLElement {
  constructor() {
    super();
    this.attachShadow({ mode: 'open' });
    this.shadowRoot.innerHTML = `
      <style>
        :host { display: block; flex: 1; min-width: 0; position: relative; background: #000; overflow: hidden; }
        svg.scene { display: block; width: 100%; height: 100%; }
        .cams { position: absolute; top: 6px; right: 14px; display: flex; gap: 4px; }
        button {
          display: flex; align-items: center; gap: 1px;
          border: 1px solid #c4c42c; padding: 0 2px; background: none; color: #c8c82c;
          font: 10px/13px "DejaVu Sans", sans-serif;
        }
      </style>
      <svg class="scene" viewBox="35 165 742 555" preserveAspectRatio="xMinYMin slice">
        <defs>
          <radialGradient id="skin" cx=".52" cy=".42" r=".58">
            <stop offset="0" stop-color="#90949c"/><stop offset=".22" stop-color="#646973"/>
            <stop offset=".8" stop-color="#4c515c"/><stop offset="1" stop-color="#3a3e48"/>
          </radialGradient>
        </defs>
        <path d="M0 0h2000v336H0z" fill="#676767"/>
        <g fill="none" stroke="#8c8c8a">${STEMS_BACK.map(stem).join('')}</g>
        ${BALLS.map(ball).join('')}
        <g fill="none" stroke="#a6a6a4" stroke-opacity=".85">${STEMS_FRONT.map(stem).join('')}</g>
      </svg>
      <div class="cams">
        ${['persp1', 'cam1 [L]'].map(t => `<button>${t}<svg width="8" height="5"><path d="M1 0h6L4 4z" fill="#c8c82c"/></svg></button>`).join('')}
      </div>`;
  }
}
customElements.define('hou-viewport', HouViewport);

class HouToolColumn extends HTMLElement {
  constructor() {
    super();
    this.attachShadow({ mode: 'open' });
    const left = this.getAttribute('side') === 'left';
    this.shadowRoot.innerHTML = `
      <style>
        :host {
          display: flex; flex-direction: column; align-items: center; flex: none;
          box-sizing: border-box;
          width: 26px;
          overflow: hidden;
          background: #3a3a3a;
        }
        :host([side=left]) { width: 35px; border-left: 1px solid #141414; }
        .fold {
          display: flex; align-items: center; align-self: stretch; flex: none;
          height: 10px; border: 0; padding: 0 3px; margin: 0 0 0 1px;
          background: linear-gradient(#5a5a5a, #3e3e3e);
          border-bottom: 1px solid #0c0c0c;
          justify-content: ${left ? 'flex-start' : 'flex-end'};
        }
      </style>
      <button class="fold" aria-label="Hide toolbar"><svg width="6" height="6"><path d="${left ? 'M6 0v6L0 3z' : 'M0 0v6l6-3z'}" fill="#000"/></svg></button>
      <slot></slot>`;
  }
}
customElements.define('hou-tool-column', HouToolColumn);

// ---------------------------------------------------------------- network
class HouNode extends HTMLElement {
  constructor() {
    super();
    this.attachShadow({ mode: 'open' });
    const inputs = Number(this.getAttribute('inputs') || 0);
    const plug = '<i></i>';
    this.shadowRoot.innerHTML = `
      <style>
        :host { display: block; position: absolute; width: 96px; white-space: nowrap; }
        .halo { position: absolute; left: 6px; top: -24px; }
        .plugs { position: relative; z-index: 1; display: flex; justify-content: center; gap: 28px; height: 7px; align-items: center; }
        i { width: 20px; height: 5px; background: radial-gradient(circle at 50% 50%, #111 1px, #8c8c8c 2px); }
        .body {
          position: relative;
          display: grid;
          grid-template-columns: 12px 12px 1fr 12px 12px;
          height: 24px;
          background: linear-gradient(#9a9a9a, #d0d0d0 60%, #acacac);
        }
        .body span { box-sizing: border-box; border-right: 1px solid #6c6c6c; }
        .body .bypass { border: 1px solid #aab43c; border-right-color: #777; }
        .body .tmpl { border: 1px solid #a86aa8; }
        .body .disp { border: 1px solid #4878a8; }
        :host([shown]) .disp { background: #00aef4; border-color: #00aef4; }
        .body hou-icon { place-self: center; width: 19px; height: 19px; }
        .label { position: absolute; left: 100px; top: 10px; font: 14px/18px "DejaVu Sans", sans-serif; color: #c8c8c8; }
        :host([selected]) .body { outline: 2px solid #e8b11c; outline-offset: 1px; }
        :host([selected]) i { outline: 2px solid #e8b11c; outline-offset: 1px; }
      </style>
      ${this.hasAttribute('shown') ? '<svg class="halo" width="85" height="86"><circle cx="42.500" cy="43" r="42.500" fill="#44678a"/><circle cx="42.500" cy="43" r="31" fill="#664b82"/></svg>' : ''}
      <div class="plugs">${plug.repeat(inputs)}</div>
      <div class="body"><span class="bypass"></span><span></span><hou-icon name="${this.getAttribute('icon')}"></hou-icon><span class="tmpl"></span><span class="disp"></span></div>
      <div class="plugs">${plug}</div>
      <div class="label"><slot></slot></div>`;
  }
  connectedCallback() {
    this.style.left = this.getAttribute('x') + 'px';
    this.style.top = this.getAttribute('y') + 'px';
  }
}
customElements.define('hou-node', HouNode);

class HouNetwork extends HTMLElement {
  constructor() {
    super();
    this.attachShadow({ mode: 'open' });
    this.shadowRoot.innerHTML = `
      <style>
        :host { display: block; flex: 1; position: relative; min-height: 0; overflow: hidden; background: #2e2e2e; }
        svg.wires { position: absolute; inset: 0; width: 100%; height: 100%; z-index: 1; pointer-events: none; }
      </style>
      <hou-node x="172" y="22" icon="sphere" inputs="1" selected>sphere1</hou-node>
      <hou-node x="172" y="118" icon="transform" inputs="1">transform1</hou-node>
      <hou-node x="364" y="157" icon="object">cam1</hou-node>
      <hou-node x="268" y="240" icon="copy" inputs="2" shown>copy1</hou-node>
      <svg class="wires" fill="none">
        <path d="M220 62v56" stroke="#8a6e28" stroke-width="1.500"/>
        <path d="M220 156c4 22 14 34 36 43s32 20 35 41" stroke="#a8a8a8"/>
        <path d="M412 196c-4 14-14 20-34 24-24 4-34 8-38 21" stroke="#b8b8b8" stroke-dasharray="2 2"/>
      </svg>`;
  }
}
customElements.define('hou-network', HouNetwork);

// ---------------------------------------------------------------- parameters
class HouParam extends HTMLElement {
  constructor() {
    super();
    this.attachShadow({ mode: 'open' });
    const type = this.getAttribute('type');
    const label = this.getAttribute('label');
    const values = this.getAttribute('values').split(',');
    let field = '';
    if (type === 'menu') {
      field = `<div class="menu"><select id="f"><option>${values[0]}</option></select><svg width="21" height="20"><path d="M0 0h21v20H0z" fill="#303030"/><path d="M7 9l3-6 3 6zM7 11l3 6 3-6z" fill="#888"/></svg></div>`;
    } else {
      field = values.map((v, i) => `<input type="text" ${i ? `aria-label="${label} ${i + 1}"` : 'id="f"'} value="${v}">`).join('');
      if (type === 'slider') field += `<input type="range" aria-label="${label} slider" min="0" max="5" step="0.1" value="${values[0]}">`;
    }
    this.shadowRoot.innerHTML = `
      <style>
        :host { display: flex; align-items: center; height: 21px; }
        :host([type=menu]) { height: 24px; }
        label { flex: none; width: 125px; padding-right: 15px; text-align: right; color: #c4c4c4; }
        .fields { display: flex; flex: 1; gap: 4px; min-width: 0; }
        input[type=text] {
          box-sizing: border-box;
          flex: 0 0 71%;
          min-width: 0;
          height: 21px;
          border: 1px solid #2a2a2a;
          padding: 0 3px;
          background: #131313;
          color: #e6e6e6;
          font: 10px/14px "DejaVu Sans Mono", monospace;
        }
        :host([type=slider]) input[type=text] { flex-basis: 33%; }
        input[type=range] {
          appearance: none;
          flex: 0 0 88%;
          height: 21px;
          margin: 0 0 0 2px;
          background: linear-gradient(90deg, #0d3c70 20%, #555 20%) 0 50% / 100% 3px no-repeat, linear-gradient(#0a0a0a, #0a0a0a) 0 50% / 100% 5px no-repeat;
        }
        input[type=range]::-webkit-slider-thumb {
          appearance: none;
          box-sizing: border-box;
          width: 7px;
          height: 21px;
          border: 1px solid #0a0a0a;
          border-radius: 1px;
          background: linear-gradient(90deg, #888, #555);
          box-shadow: inset 0 0 0 1px #777;
        }
        .menu { display: grid; border: 1px solid #222; box-shadow: 0 1px 2px #222; }
        .menu > * { grid-area: 1 / 1; }
        .menu svg { justify-self: end; pointer-events: none; }
        select {
          appearance: none;
          border: 0;
          height: 20px;
          padding: 0 38px 0 10px;
          background: linear-gradient(#585858, #424242);
          color: #c4c4c4;
          font: 10px/12px "DejaVu Sans", sans-serif;
        }
        :host([wide]) select { min-width: 156px; }
        :host([strong]) select { font: bold 10px/12px "DejaVu Sans Condensed", "DejaVu Sans", sans-serif; color: #dcdcdc; }
      </style>
      <label for="f">${label}</label><div class="fields">${field}</div>`;
  }
}
customElements.define('hou-param', HouParam);

class HouParams extends HTMLElement {
  constructor() {
    super();
    this.attachShadow({ mode: 'open' });
    this.shadowRoot.innerHTML = `
      <style>
        :host { display: block; flex: 1; min-height: 0; overflow: hidden; background: #3a3a3a; }
        header {
          display: flex; align-items: center;
          padding: 3px 0 0 5px;
          margin-left: 2px;
          height: 23px;
          border-bottom: 1px solid #0a0a0a;
          --icon: 16px;
          --tool-w: 18px;
          --tool-h: 22px;
        }
        label { font-weight: bold; margin: 0 6px 0 3px; color: #d0d0d0; }
        input {
          flex: 1; min-width: 0; height: 20px; box-sizing: border-box;
          border: 0; padding: 0 3px; background: #131313; color: #e6e6e6;
          font: 10px/14px "DejaVu Sans Mono", monospace;
        }
        form { display: flex; flex-direction: column; gap: 2px; padding-top: 3px; }
      </style>
      <header><hou-tool icon="sphere" menu="down"></hou-tool><label for="name">Sphere</label><input id="name" value="sphere1"></header>
      <form>
        <hou-param type="menu" label="Primitive Type" values="Polygon Mesh" strong></hou-param>
        <hou-param type="menu" label="Connectivity" values="Quadrilaterals" wide></hou-param>
        <hou-param type="vector" label="Radius" values="1,1,1"></hou-param>
        <hou-param type="vector" label="Center" values="0,0,0"></hou-param>
        <hou-param type="slider" label="Uniform Scale" values="1"></hou-param>
        <hou-param type="menu" label="Orientation" values="Y Axis"></hou-param>
      </form>`;
  }
}
customElements.define('hou-params', HouParams);

// ---------------------------------------------------------------- app
const shelfTabs = names => names.map((t, i) => `<hou-shelf-tab slot="tab" ${i ? '' : 'active'}>${t}</hou-shelf-tab>`).join('');
const shelfTools = tools => tools.map(([icon, t]) => `<hou-shelf-tool icon="${icon}">${t}</hou-shelf-tool>`).join('');
const tabs = (names, first = '') => names.map((t, i) => `<hou-tab ${i ? '' : 'active ' + first}>${t}</hou-tab>`).join('');
const tools = list => list.split(' ').map(t => {
  const [icon, ...flags] = t.split('.');
  return `<hou-tool icon="${icon}" ${flags.join(' ')}></hou-tool>`;
}).join('');

class HouApp extends HTMLElement {
  constructor() {
    super();
    this.attachShadow({ mode: 'open' });
    this.shadowRoot.innerHTML = `
      <style>
        :host { display: flex; flex-direction: column; height: 100vh; overflow: hidden; cursor: default; }
        .shelves { display: grid; grid-template-columns: minmax(0, 678fr) 10px minmax(0, 592fr); flex: none; border-bottom: 1px solid #0c0c0c; }
        .desk { display: grid; grid-template-columns: minmax(0, 803fr) 8px minmax(0, 469fr); flex: 1; min-height: 0; }
        .pane { display: flex; flex-direction: column; min-height: 0; min-width: 0; }
        .view { display: flex; flex: 1; min-height: 0; }
        .right { display: grid; grid-template-rows: minmax(0, 419fr) auto minmax(0, 215fr); min-height: 0; }
        .title { font-weight: bold; margin-left: -2px; color: #e0e0e0; }
        .push { margin-left: auto; }
        .gap { margin-left: 8px; }
        hr { flex: none; width: 26px; height: 1px; margin: 4px 0; border: 0; background: #2c2c2c; }
        .group { display: flex; flex-direction: column; margin-top: 6px; border: 1px solid #1a1a1a; background: #4c4c4c; }
        .side { --tool-w: 26px; --tool-h: 28px; --icon: 20px; }
        .side .group { --tool-w: 24px; --tool-h: 24px; --icon: 17px; }
        .opts { --tool-w: 23px; --tool-h: 22px; --icon: 15px; gap: 2px; }
        .opts hr { margin: 0 0 3px; }
        .opts .low { margin-top: 4px; }
        .marks { display: flex; flex-direction: column; gap: 3px; }
        .paths { margin-right: 2px; }
      </style>
      <hou-menu-bar></hou-menu-bar>
      <div class="shelves">
        <hou-shelf>
          ${shelfTabs(['Create', 'Modify', 'Model', 'Polygon', 'Deform', 'Texture', 'Rigging', 'Character', 'Animation', 'Hair', 'Grooming', 'Cloud FX', 'Volume'])}
          ${shelfTools([['box', 'Box'], ['sphere', 'Sphere'], ['tube', 'Tube'], ['torus', 'Torus'], ['grid', 'Grid'], ['metaball', 'Metaball'], ['lsystem', 'LSystem'], ['platonic', 'Platonic Sol...'], ['curve', 'Curve'], ['drawcurve', 'Draw Curve'], ['spray', 'Spray Paint'], ['circle', 'Circle'], ['font', 'Font'], ['file', 'File']])}
        </hou-shelf>
        <hou-splitter kind="shelf"></hou-splitter>
        <hou-shelf bare>
          ${shelfTabs(['Lights and C...', 'Particles', 'Grains', 'Rigid Bodies', 'Particle Fluids', 'Viscous Fluids', 'Ocean FX', 'Fluid Contai...', 'Populate Con...'])}
          ${shelfTools([['camera', 'Camera'], ['pointlight', 'Point Light'], ['spotlight', 'Spot Light'], ['arealight', 'Area Light'], ['geolight', 'Geometry L...'], ['volumelight', 'Volume Light'], ['distantlight', 'Distant Light'], ['envlight', 'Environmen...'], ['skylight', 'Sky Light'], ['gilight', 'GI Light'], ['causticlight', 'Caustic Light']])}
        </hou-shelf>
      </div>
      <div class="desk">
        <section class="pane">
          <hou-tabs controls>${tabs(['Scene View', 'Animation Editor', 'Render View', 'Composite View', 'Motion FX View', 'Geometry Spreadsheet'])}</hou-tabs>
          <hou-path-bar>
            <hou-tool icon="pin" class="gap"></hou-tool><hou-tool icon="target"></hou-tool>
            <hou-tool icon="cubeblue" menu="down" class="gap"></hou-tool><hou-tool icon="shapes" menu="down"></hou-tool><hou-tool icon="square" menu="down" class="paths"></hou-tool>
          </hou-path-bar>
          <hou-toolbar>
            <hou-tool icon="camera" menu="down" dim></hou-tool><span class="title">View</span>
            <hou-tool icon="people" menu="down" class="push"></hou-tool><hou-tool icon="help"></hou-tool>
          </hou-toolbar>
          <div class="view">
            <hou-tool-column side="left" class="side">
              <div class="group">${tools('selobj.menu selprim.on.menu seldyn.menu')}</div>
              <hr>${tools('select.menu move rotate scale handle.menu')}
              <hr>${tools('snapgrid.menu snapcurve.menu snappoint.menu snapmulti.menu')}
              <hr>${tools('camera.on flipbook render.menu')}
            </hou-tool-column>
            <hou-viewport></hou-viewport>
            <hou-tool-column side="right" class="opts">
              <hou-tool icon="plane" on class="low"></hou-tool>
              ${tools('lock.on nolight headlight.menu light.on.menu lightplus.menu lightshadow.menu')}
              <hou-tool icon="checker" on menu class="low"></hou-tool><hou-tool icon="eye" menu="down"></hou-tool>
              <hr>
              <div class="marks">${tools('point pointnormal pointtrail pointnum primnormal primnum hull uv axes material')}<hou-tool>abc</hou-tool><hou-tool icon="image" on></hou-tool></div>
            </hou-tool-column>
          </div>
        </section>
        <hou-splitter kind="column"></hou-splitter>
        <div class="right">
          <section class="pane">
            <hou-tabs>${tabs(['/obj/Kulki', 'Tree View', 'Material Palette', 'Asset Browser'], 'current')}</hou-tabs>
            <hou-path-bar ahead plain></hou-path-bar>
            <hou-toolbar>${tools('tree list split palette')}<hou-tool icon="nodebox" class="gap"></hou-tool>${tools('note chest')}</hou-toolbar>
            <hou-network></hou-network>
          </section>
          <hou-splitter kind="row"></hou-splitter>
          <section class="pane">
            <hou-tabs>${tabs(['sphere1', 'Take List', 'Performance Monitor'], 'current')}</hou-tabs>
            <hou-path-bar plain></hou-path-bar>
            <hou-params></hou-params>
          </section>
        </div>
      </div>`;
  }
}
customElements.define('hou-app', HouApp);
</script>
</body>
</html>
